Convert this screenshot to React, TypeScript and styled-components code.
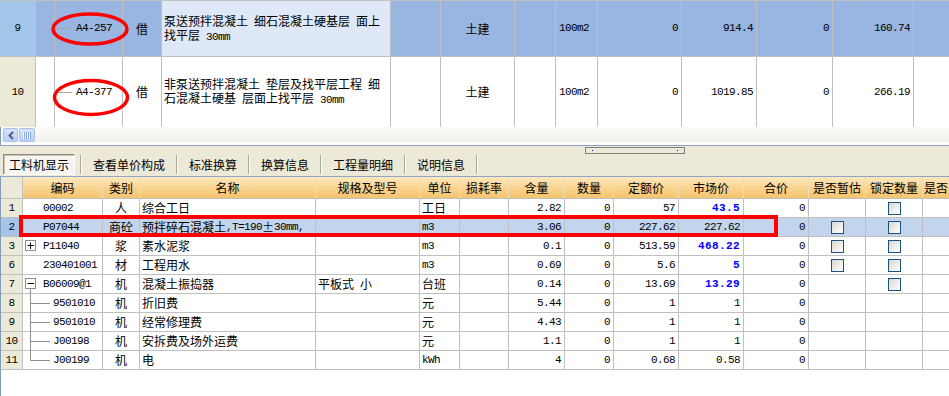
import React from "react";
import styled, { createGlobalStyle, css } from "styled-components";

const GlobalStyle = createGlobalStyle`
  html, body { margin: 0; padding: 0; background: #ffffff; }
  body {
    font-family: "Noto Sans CJK SC", "Liberation Sans", sans-serif;
    font-size: 12px;
    color: #000;
  }
`;

type Tone = "sel" | "focus" | "headSel" | "head" | "plain" | "rowSel" | "rowHeadSel";
type Align = "left" | "center" | "right";

const toneBg: Record<Tone, string> = {
  sel: "#99b5e1",
  focus: "#dfe8f6",
  headSel: "#a3c5ea",
  head: "#ece9d8",
  plain: "#ffffff",
  rowSel: "#c3d4ed",
  rowHeadSel: "#a6c4ea",
};

const justify = (a?: Align) =>
  a === "center" ? "center" : a === "right" ? "flex-end" : "flex-start";

const TOP_COLS =
  "36px 19px 68px 39px 229px 50px 74px 41px 42px 84px 75px 76px 81px 60px";
const BOT_COLS =
  "22px 80px 37px 176px 104px 40px 49px 56px 49px 65px 65px 65px 57px 57px 80px";

const Page = styled.div`
  width: 949px;
  height: 396px;
  overflow: hidden;
  display: flex;
  flex-direction: column;
  background: #fff;
`;

/* ---------- text helpers ---------- */
const Mono = styled.span<{ $strong?: boolean }>`
  font-family: "Liberation Mono", "DejaVu Sans Mono", monospace;
  font-size: 11px;
  letter-spacing: -0.6px;
  white-space: pre;
  line-height: 1;
  ${(p) =>
    p.$strong &&
    css`
      color: #0000ff;
      font-weight: bold;
      letter-spacing: 0.4px;
    `}
`;

const mix = (s: string) =>
  s
    .split(/([\x20-\x7e]+)/)
    .filter(Boolean)
    .map((part, i) =>
      /^[\x20-\x7e]+$/.test(part) ? (
        <Mono key={i}>{part}</Mono>
      ) : (
        <React.Fragment key={i}>{part}</React.Fragment>
      )
    );

/* ---------- top grid ---------- */
const TopPanel = styled.div`
  position: relative;
  flex: none;
  height: 127px;
  box-sizing: border-box;
  border-top: 1px solid #c0c0c0;
  overflow: hidden;
`;

const TopRow = styled.div<{ $h: number }>`
  display: grid;
  grid-template-columns: ${TOP_COLS};
  height: ${(p) => p.$h}px;
`;

const TopCell = styled.div<{ $tone?: Tone; $align?: Align; $pad?: number }>`
  box-sizing: border-box;
  border-right: 1px solid #c0c0c0;
  border-bottom: 1px solid #c0c0c0;
  background: ${(p) => toneBg[p.$tone || "plain"]};
  display: flex;
  align-items: center;
  justify-content: ${(p) => justify(p.$align)};
  padding: 0 ${(p) => (p.$pad ?? 3)}px;
  overflow: hidden;
  white-space: nowrap;
  line-height: 14px;
`;

const NameLines = styled.div`
  display: flex;
  flex-direction: column;
  line-height: 12px;
  white-space: nowrap;
`;

const Annot = styled.svg`
  position: absolute;
  left: 0;
  top: 0;
  pointer-events: none;
`;

const TopTreeLine = () => (
  <svg width="21" height="3" style={{ flex: "none" }}>
    <line x1="0" y1="1.5" x2="17" y2="1.5" stroke="#a8a8a8" strokeWidth="1" />
  </svg>
);

/* ---------- scrollbar ---------- */
const HScroll = styled.div`
  flex: none;
  height: 18px;
  box-sizing: border-box;
  border-left: 1px solid #7f9db9;
  background: linear-gradient(#fcfcfa 0%, #f1f0ea 80%, #ffffff 88%, #ffffff 100%);
  display: flex;
  align-items: flex-start;
  gap: 1px;
  padding: 1px 0 0 2px;
`;

const ScrollBtn = styled.div<{ $w: number }>`
  width: ${(p) => p.$w}px;
  height: 14px;
  box-sizing: border-box;
  border: 1px solid #aac0ef;
  border-radius: 2px;
  background: linear-gradient(#d7e3fd, #b9cdf8);
  display: flex;
  align-items: center;
  justify-content: center;
`;

/* ---------- splitter + tabs ---------- */
const SplitArea = styled.div`
  flex: none;
  background: #ece9d8;
  border-top: 1px solid #8ea4c8;
  border-bottom: 1px solid #8ea4c8;
  display: flex;
  flex-direction: column;
`;

const GripRow = styled.div`
  height: 8px;
  display: flex;
  align-items: flex-start;
`;

const Grip = styled.div`
  margin: 1px 0 0 585px;
  width: 100px;
  height: 7px;
  box-sizing: border-box;
  border: 1px solid #808080;
  display: flex;
  align-items: center;
  justify-content: space-between;
  padding: 0 6px;
`;

const GripDot = styled.span`
  width: 1px;
  height: 1px;
  background: #0000a0;
`;

const TabStrip = styled.div`
  height: 22px;
  display: flex;
  align-items: flex-start;
  padding-left: 3px;
`;

const Tab = styled.div<{ $active?: boolean }>`
  height: 21px;
  box-sizing: border-box;
  padding: 0 5px;
  display: flex;
  align-items: center;
  font-size: 12px;
  line-height: 14px;
  white-space: nowrap;
  border: 1px solid transparent;
  ${(p) =>
    p.$active &&
    css`
      border-color: #8d8a7e #ffffff #ffffff #8d8a7e;
      box-shadow: inset 1px 1px 0 #c9c6b7;
      background: #f6f5f0;
    `}
`;

const TabSep = styled.span`
  width: 2px;
  height: 19px;
  margin: 1px 5px 0;
  box-sizing: border-box;
  border-left: 1px solid #aca899;
  border-right: 1px solid #ffffff;
`;

/* ---------- bottom grid ---------- */
const BottomGrid = styled.div`
  position: relative;
  flex: 1;
  border-left: 1px solid #7f9db9;
  background: #fff;
`;

const BotRow = styled.div<{ $h: number }>`
  display: grid;
  grid-template-columns: ${BOT_COLS};
  height: ${(p) => p.$h}px;
`;

const HeadCell = styled.div<{ $corner?: boolean; $align?: Align }>`
  box-sizing: border-box;
  border-right: 1px solid ${(p) => (p.$corner ? "#c0c0c0" : "#efdcb6")};
  border-bottom: 1px solid #c0c0c0;
  background: ${(p) =>
    p.$corner
      ? "#ece9d8"
      : "linear-gradient(#fde8bd 0%, #f9d593 50%, #f4c46d 100%)"};
  display: flex;
  align-items: center;
  justify-content: ${(p) => justify(p.$align || "center")};
  padding: 0 1px;
  white-space: nowrap;
  overflow: hidden;
  line-height: 14px;
`;

const Cell = styled.div<{ $tone?: Tone; $align?: Align; $pad?: number }>`
  box-sizing: border-box;
  border-right: 1px solid #c0c0c0;
  border-bottom: 1px solid #c0c0c0;
  background: ${(p) => toneBg[p.$tone || "plain"]};
  display: flex;
  align-items: center;
  justify-content: ${(p) => justify(p.$align)};
  padding: 0 ${(p) => (p.$pad ?? 3)}px;
  white-space: nowrap;
  overflow: visible;
  line-height: 14px;
`;

const Check = styled.span`
  width: 13px;
  height: 13px;
  box-sizing: border-box;
  border: 1px solid #1c5180;
  background: linear-gradient(135deg, #d6d5ce 0%, #efeee9 55%, #ffffff 100%);
`;

const RedBox = styled.div`
  position: absolute;
  left: 18px;
  top: 38px;
  width: 759px;
  height: 22px;
  box-sizing: border-box;
  border: 4px solid #ff0000;
  pointer-events: none;
`;

type TreeKind = "none" | "plus" | "minus" | "child" | "last";

const TreeGlyph = ({ kind }: { kind: TreeKind }) => {
  if (kind === "child" || kind === "last") {
    return (
      <svg width="28" height="18" style={{ flex: "none", overflow: "visible" }}>
        <line
          x1="5.5"
          y1="-1"
          x2="5.5"
          y2={kind === "last" ? 9.5 : 19}
          stroke="#8f8f8f"
        />
        <line x1="5.5" y1="9.5" x2="25" y2="9.5" stroke="#8f8f8f" />
      </svg>
    );
  }
  return (
    <svg width="18" height="18" style={{ flex: "none", overflow: "visible" }}>
      {kind !== "none" && (
        <>
          <rect x="0.5" y="3.5" width="10" height="10" fill="#fff" stroke="#8f8f8f" />
          <line x1="2.5" y1="8.5" x2="9" y2="8.5" stroke="#000" />
          {kind === "plus" && <line x1="5.5" y1="5.5" x2="5.5" y2="12" stroke="#000" />}
          {kind === "minus" && (
            <line x1="5.5" y1="14" x2="5.5" y2="19" stroke="#8f8f8f" />
          )}
        </>
      )}
    </svg>
  );
};

type DataRow = {
  n: string;
  tree: TreeKind;
  code: string;
  kind: string;
  name: string;
  spec?: string;
  unit: string;
  qty: string;
  price: string;
  market: string;
  blue?: boolean;
  est?: boolean;
  lock?: boolean;
  sel?: boolean;
};

const rows: DataRow[] = [
  { n: "1", tree: "none", code: "00002", kind: "人", name: "综合工日", unit: "工日", qty: "2.82", price: "57", market: "43.5", blue: true, lock: true },
  { n: "2", tree: "none", code: "P07044", kind: "商砼", name: "预拌碎石混凝土,T=190±30mm,", unit: "m3", qty: "3.06", price: "227.62", market: "227.62", est: true, lock: true, sel: true },
  { n: "3", tree: "plus", code: "P11040", kind: "浆", name: "素水泥浆", unit: "m3", qty: "0.1", price: "513.59", market: "468.22", blue: true, est: true, lock: true },
  { n: "6", tree: "none", code: "230401001", kind: "材", name: "工程用水", unit: "m3", qty: "0.69", price: "5.6", market: "5", blue: true, est: true, lock: true },
  { n: "7", tree: "minus", code: "B06009@1", kind: "机", name: "混凝土振捣器", spec: "平板式 小", unit: "台班", qty: "0.14", price: "13.69", market: "13.29", blue: true, lock: true },
  { n: "8", tree: "child", code: "9501010", kind: "机", name: "折旧费", unit: "元", qty: "5.44", price: "1", market: "1" },
  { n: "9", tree: "child", code: "9501010", kind: "机", name: "经常修理费", unit: "元", qty: "4.43", price: "1", market: "1" },
  { n: "10", tree: "child", code: "J00198", kind: "机", name: "安拆费及场外运费", unit: "元", qty: "1.1", price: "1", market: "1" },
  { n: "11", tree: "last", code: "J00199", kind: "机", name: "电", unit: "kWh", qty: "4", price: "0.68", market: "0.58" },
];

const headers = ["", "编码", "类别", "名称", "规格及型号", "单位", "损耗率", "含量", "数量", "定额价", "市场价", "合价", "是否暂估", "锁定数量", "是否"];

const tabs = ["工料机显示", "查看单价构成", "标准换算", "换算信息", "工程量明细", "说明信息"];

type TopData = {
  n: string;
  code: string;
  lines: string[];
  h: number;
  sel: boolean;
  vals: [string, string, string, string];
};

const topRows: TopData[] = [
  { n: "9", code: "A4-257", lines: ["泵送预拌混凝土 细石混凝土硬基层 面上", "找平层 30mm"], h: 56, sel: true, vals: ["0", "914.4", "0", "160.74"] },
  { n: "10", code: "A4-377", lines: ["非泵送预拌混凝土 垫层及找平层工程 细", "石混凝土硬基 层面上找平层 30mm"], h: 71, sel: false, vals: ["0", "1019.85", "0", "266.19"] },
];

export default function App() {
  return (
    <>
      <GlobalStyle />
      <Page>
        <TopPanel>
          {topRows.map((r) => {
            const t: Tone = r.sel ? "sel" : "plain";
            return (
              <TopRow key={r.n} $h={r.h}>
                <TopCell $tone={r.sel ? "headSel" : "head"} $align="center">
                  <Mono>{r.n}</Mono>
                </TopCell>
                <TopCell $tone={t} />
                <TopCell $tone={t} $pad={0}>
                  <TopTreeLine />
                  <Mono>{r.code}</Mono>
                </TopCell>
                <TopCell $tone={t} $align="center">借</TopCell>
                <TopCell $tone={r.sel ? "focus" : "plain"} $pad={2}>
                  <NameLines>
                    {r.lines.map((l, i) => (
                      <div key={i}>{mix(l)}</div>
                    ))}
                  </NameLines>
                </TopCell>
                <TopCell $tone={t} />
                <TopCell $tone={t} $align="center">土建</TopCell>
                <TopCell $tone={t} />
                <TopCell $tone={t}>
                  <Mono>100m2</Mono>
                </TopCell>
                {r.vals.map((v, i) => (
                  <TopCell key={i} $tone={t} $align="right">
                    <Mono>{v}</Mono>
                  </TopCell>
                ))}
                <TopCell $tone={t} />
              </TopRow>
            );
          })}
          <Annot width="949" height="126">
            <ellipse cx="90" cy="28" rx="37" ry="15" fill="none" stroke="#ff0000" strokeWidth="3.5" />
            <ellipse cx="91" cy="96.5" rx="36.5" ry="17" fill="none" stroke="#ff0000" strokeWidth="3.5" />
          </Annot>
        </TopPanel>

        <HScroll>
          <ScrollBtn $w={15}>
            <svg width="8" height="9">
              <path d="M6 1 L2.5 4.5 L6 8" fill="none" stroke="#4d6185" strokeWidth="2" />
            </svg>
          </ScrollBtn>
          <ScrollBtn $w={16}>
            <svg width="8" height="7">
              {[0.5, 2.5, 4.5, 6.5].map((x) => (
                <line key={x} x1={x} y1="0" x2={x} y2="7" stroke="#eef3fe" />
              ))}
              {[1.5, 3.5, 5.5, 7.5].map((x) => (
                <line key={x} x1={x} y1="0" x2={x} y2="7" stroke="#8caae6" />
              ))}
            </svg>
          </ScrollBtn>
        </HScroll>

        <SplitArea>
          <GripRow>
            <Grip>
              <GripDot />
              <GripDot />
            </Grip>
          </GripRow>
          <TabStrip>
            {tabs.map((t, i) => (
              <React.Fragment key={t}>
                <Tab $active={i === 0}>{t}</Tab>
                <TabSep />
              </React.Fragment>
            ))}
          </TabStrip>
        </SplitArea>

        <BottomGrid>
          <BotRow $h={22}>
            {headers.map((h, i) => (
              <HeadCell key={i} $corner={i === 0} $align={i === 14 ? "left" : "center"}>
                {h}
              </HeadCell>
            ))}
          </BotRow>
          {rows.map((r) => {
            const t: Tone = r.sel ? "rowSel" : "plain";
            return (
              <BotRow key={r.n} $h={19}>
                <Cell $tone={r.sel ? "rowHeadSel" : "head"} $align="center">
                  <Mono>{r.n}</Mono>
                </Cell>
                <Cell $tone={t} $pad={2}>
                  <TreeGlyph kind={r.tree} />
                  <Mono>{r.code}</Mono>
                </Cell>
                <Cell $tone={t} $align="center">{r.kind}</Cell>
                <Cell $tone={t} $pad={2}>{mix(r.name)}</Cell>
                <Cell $tone={t} $pad={2}>{r.spec ? mix(r.spec) : null}</Cell>
                <Cell $tone={t} $pad={2}>{mix(r.unit)}</Cell>
                <Cell $tone={t} />
                <Cell $tone={t} $align="right">
                  <Mono>{r.qty}</Mono>
                </Cell>
                <Cell $tone={t} $align="right">
                  <Mono>0</Mono>
                </Cell>
                <Cell $tone={t} $align="right">
                  <Mono>{r.price}</Mono>
                </Cell>
                <Cell $tone={t} $align="right">
                  <Mono $strong={r.blue}>{r.market}</Mono>
                </Cell>
                <Cell $tone={t} $align="right">
                  <Mono>0</Mono>
                </Cell>
                <Cell $tone={t} $align="center">{r.est ? <Check /> : null}</Cell>
                <Cell $tone={t} $align="center">{r.lock ? <Check /> : null}</Cell>
                <Cell $tone={t} />
              </BotRow>
            );
          })}
          <RedBox />
        </BottomGrid>
      </Page>
    </>
  );
}
